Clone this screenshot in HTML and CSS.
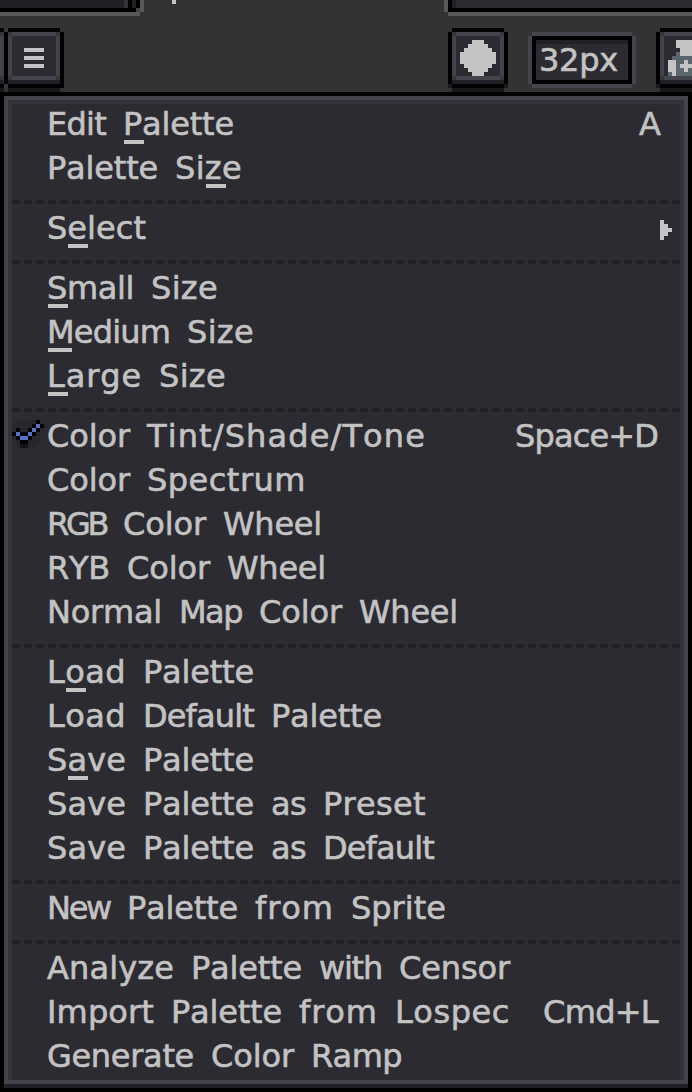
FILE: index.html
```html
<!DOCTYPE html>
<html lang="en">
<head>
<meta charset="utf-8">
<title>Palette menu</title>
<link rel="stylesheet" href="styles.css">
</head>
<body>
<div class="app">
  <header class="top">
    <svg class="chrome" width="692" height="92" viewBox="0 0 173 23" shape-rendering="crispEdges" aria-hidden="true">
      <path fill="#202126" d="M0 0h31v2H0zM33 0h1v2h-1zM113 0h1v2h-1z"/>
      <path fill="#33333a" d="M31 0h1v2h-1z"/>
      <path fill="#000" d="M32 0h1v2h-1zM34 0h1v3h-1zM0 2h34v1H0zM112 0h1v3h-1zM112 2h61v1h-61z"/>
      <path fill="#2c2b31" d="M114 0h59v2h-59z"/>
      <path fill="#595959" d="M0 3h35v1H0zM35 0h1v3h-1zM111 0h1v3h-1zM112 3h61v1h-61z"/>
      <path fill="#444" d="M34 2h1v1h-1z"/>
      <path fill="#c3c3c3" d="M43 0h1v1h-1z"/>
      <path fill="#000" d="M0 7h1v15H0z"/>
      <path fill="#44454c" d="M0 9h1v10H0z"/>
      <path fill="#36363c" d="M0 8h1v1H0zM0 19h1v1H0z"/>
      <path fill="#202126" d="M0 20h1v1H0z"/>
      <path fill="#181818" d="M0 22h1v1H0z"/>
    </svg>
    <div class="tools">
      <svg class="btn" width="60" height="64" viewBox="0 0 15 16" shape-rendering="crispEdges" role="img" aria-label="Options">
        <path fill="#000" d="M1 0h13v1h1v14H0V1h1z"/><path fill="#181818" d="M1 15h13v1H1z"/><path fill="#383838" d="M0 0h1v1H0zM0 14h1v1H0z"/>
        <path fill="#202126" d="M1 13h13v1H1z"/><path fill="#36373d" d="M1 1h13v12H1z"/><path fill="#44454c" d="M2 1h11v12H2zM1 2h13v10H1z"/><path fill="#2c2b31" d="M2 2h11v10H2z"/>
        <path fill="#c3c3c3" d="M5 5h5v1H5zM5 7h5v1H5zM5 9h5v1H5z"/>
      </svg>
      <svg class="btn brush" width="60" height="64" viewBox="0 0 15 16" shape-rendering="crispEdges" role="img" aria-label="Brush">
        <path fill="#000" d="M1 0h13v1h1v13H0V1h1z"/><path fill="#000" d="M1 14h13v1H1z"/><path fill="#181818" d="M1 15h13v1H1zM0 14h1v1H0zM14 14h1v1h-1z"/>
        <path fill="#202126" d="M1 13h13v1H1z"/><path fill="#36373d" d="M1 1h13v12H1z"/><path fill="#44454c" d="M2 1h11v12H2zM1 2h13v10H1z"/><path fill="#2c2b31" d="M2 2h11v10H2z"/>
        <path fill="#c3c3c3" d="M6 3h3v1h1v1h1v1h1v3h-1v1h-1v1H9v1H6v-1H5v-1H4V9H3V6h1V5h1V4h1z"/>
      </svg>
      <div class="field"><span class="w">32px</span></div>
      <svg class="btn stamp" width="60" height="64" viewBox="0 0 15 16" shape-rendering="crispEdges" role="img" aria-label="Stamp">
        <path fill="#000" d="M1 0h14v15H1v-1H0V1h1z"/><path fill="#181818" d="M1 15h14v1H1zM0 14h1v1H0z"/>
        <path fill="#202126" d="M1 13h14v1H1z"/><path fill="#36373d" d="M1 1h13v12H1z"/><path fill="#44454c" d="M2 1h13v12H2zM1 2h13v10H1z"/><path fill="#2c2b31" d="M2 2h13v10H2z"/>
        <path fill="#5a666e" d="M5 6h1v1h9v5H3v-1h1V7h1z"/>
        <path fill="#c3c3c3" d="M5 3h10v4H6V5H5zM3 8h2v4H4v-1H3zM7 8h1v1h1v1H8v1H7v-1H6V9h1z"/>
      </svg>
    </div>
  </header>
  <nav class="menu">
    <div class="row"><p>Edit <u>P</u>alette</p><kbd>A</kbd></div>
    <div class="row"><p>Palette Si<u>z</u>e</p></div>
    <div class="sep"></div>
    <div class="row"><p>S<u>e</u>lect</p>
      <svg class="arrow" width="12" height="20" viewBox="0 0 3 5" shape-rendering="crispEdges"><path fill="#c3c3c3" d="M0 0h1v1h1v1h1v1H2v1H1v1H0z"/></svg></div>
    <div class="sep"></div>
    <div class="row"><p><u>S</u>mall Size</p></div>
    <div class="row"><p><u class="wide">M</u>edium Size</p></div>
    <div class="row"><p><u>L</u>arge Size</p></div>
    <div class="sep"></div>
    <div class="row">
      <svg class="check" width="32" height="28" viewBox="0 0 8 7" shape-rendering="crispEdges"><path fill="#27272b" d="M1 0h5v7H1zM0 1h1v4H0zM6 2h1v4H6z"/><path fill="#000" d="M6 0h1v1h1v1H7v1H6v1H5v1H4v1H2V5H1V4H0V3h1V2h1v1h2V2h1V1h1z"/><path fill="#121214" d="M2 6h2v1H2z"/><path fill="#5572c4" d="M1 3h1v1H1zM2 4h2v1H2zM4 3h1v1H4zM5 2h1v1H5zM6 1h1v1H6z"/></svg>
      <p>Color Tint/Shade/Tone</p><kbd>Space+D</kbd></div>
    <div class="row"><p>Color Spectrum</p></div>
    <div class="row"><p>RGB Color Wheel</p></div>
    <div class="row"><p>RYB Color Wheel</p></div>
    <div class="row"><p>Normal Map Color Wheel</p></div>
    <div class="sep"></div>
    <div class="row"><p>L<u>o</u>ad Palette</p></div>
    <div class="row"><p>Load Default Palette</p></div>
    <div class="row"><p>S<u>a</u>ve Palette</p></div>
    <div class="row"><p>Save Palette as Preset</p></div>
    <div class="row"><p>Save Palette as Default</p></div>
    <div class="sep"></div>
    <div class="row"><p>New Palette from Sprite</p></div>
    <div class="sep"></div>
    <div class="row"><p>Analyze Palette with Censor</p></div>
    <div class="row"><p>Import Palette from Lospec</p><kbd>Cmd+L</kbd></div>
    <div class="row"><p>Generate Color Ramp</p></div>
  </nav>
</div>
<script src="labels.js"></script>
</body>
</html>
```

FILE: styles.css
```css
* { box-sizing: border-box; }
body {
  margin: 0;
  background: #000;
  color: #c3c3c3;
  font: 32px/32px "DejaVu Sans", sans-serif;
  font-kerning: none;
  font-variant-ligatures: none;
  -webkit-text-stroke: 0.6px #c3c3c3;
}
.app {
  width: 692px;
  height: 1092px;
  overflow: hidden;
  background: linear-gradient(#202126, #202126) 4px 1084px / 684px 4px no-repeat #000;
}
.top { display: grid; height: 92px; background: #333; }
.chrome, .tools { grid-area: 1 / 1; }
.tools { display: flex; align-items: flex-start; padding: 28px 0 0 4px; overflow: hidden; }
.btn { flex: none; display: block; }
.brush { margin-left: 384px; }
.stamp { margin-left: 20px; }
.field {
  flex: none;
  width: 100px;
  height: 48px;
  margin: 8px 4px 0 24px;
  padding: 4px 0 0 3px;
  background: #2c2b31;
  border: 4px solid #000;
  box-shadow: 0 -4px #44454c, 0 4px #44454c, -4px 0 #44454c, 4px 0 #44454c, inset 0 4px #202126;
}
.menu {
  height: 988px;
  margin: 4px 4px 0;
  padding-top: 8px;
  background: #2c2b31;
  border: 4px solid #44454c;
  box-shadow: inset 0 4px #333439, inset 4px 0 #333439, inset -4px 0 #333439;
}
.row {
  position: relative;
  display: flex;
  justify-content: space-between;
  height: 44px;
  padding: 0 25px 0 39px;
  white-space: nowrap;
}
.row p { margin: 0; word-spacing: 5.8px; }
.row kbd { font: inherit; }
.w { display: inline-block; }
u { position: relative; text-decoration: none; }
u::after {
  content: "";
  position: absolute;
  left: 1px;
  bottom: -1px;
  width: 20px;
  height: 4px;
  background: #c3c3c3;
}
u.wide::after { width: 24px; }
.sep {
  height: 16px;
  margin: 0 4px;
  background: repeating-linear-gradient(90deg, #202126 0 8px, transparent 8px 12px) 0 4px / 100% 4px no-repeat;
}
.arrow { position: absolute; left: 652px; top: 8px; }
.check { position: absolute; left: 4px; top: 0; }
```

FILE: labels.js
```js
// Spaces each word's letters to the advances of the 4px-grid interface font.
const ADVANCE = { i: 2, l: 2, I: 2, t: 3, f: 3, r: 4, s: 4, '/': 4, m: 8, w: 6, W: 8, M: 6, T: 6, Y: 6, '+': 6 };
const GRID = 4;

document.querySelectorAll('.row p, .row kbd').forEach(label => {
  const words = [];
  let word = document.createElement('span');
  const flush = () => { if (word.textContent) words.push(word); word = document.createElement('span'); };
  [...label.childNodes].forEach(node => {
    if (node.nodeType !== Node.TEXT_NODE) { word.append(node); return; }
    node.textContent.split(' ').forEach((part, i) => { if (i) flush(); word.append(part); });
  });
  flush();
  label.textContent = '';
  words.forEach((w, i) => { w.className = 'w'; if (i) label.append(' '); label.append(w); });
});

document.querySelectorAll('.w').forEach(w => {
  const text = w.textContent;
  const width = [...text].reduce((sum, c) => sum + (ADVANCE[c] || 5), 0) * GRID;
  w.style.letterSpacing = (width - 1 - w.getBoundingClientRect().width) / text.length + 'px';
  w.style.width = width + 'px';
});
```
